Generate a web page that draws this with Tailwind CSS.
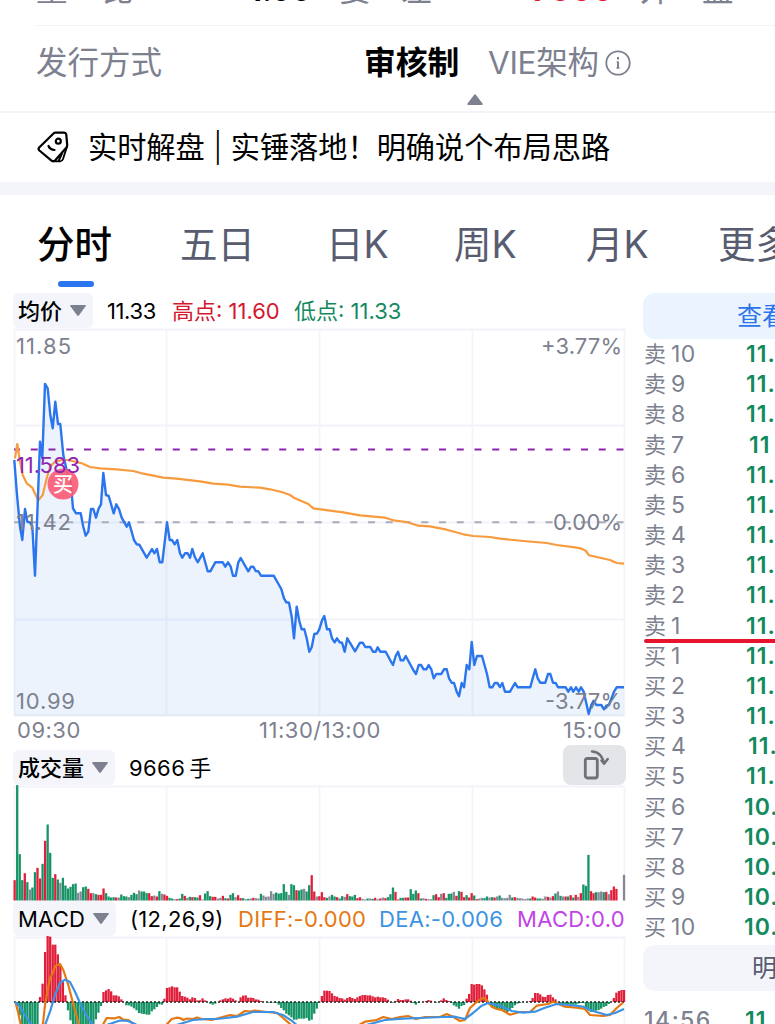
<!DOCTYPE html>
<html lang="zh-CN">
  <head>
    <meta charset="UTF-8" />
    <meta name="viewport" content="width=device-width, initial-scale=1.0" />
    <title>分时</title>
    <script src="https://cdn.jsdelivr.net/npm/@tailwindcss/browser@4"></script>
    <style>
      body {
        font-family: Inter, "Noto Sans CJK SC", sans-serif;
      }
    </style>
  </head>
  <body class="bg-white text-black">
    <div class="w-[775px] h-[1024px] overflow-hidden">
      <!-- Quote details -->
      <div class="h-[26px] overflow-hidden">
        <div class="-mt-[46px] h-[72px] ml-9 flex items-center border-b border-[#f3f4f8] text-[31.5px] leading-none whitespace-nowrap text-[#7d818f]">
          <span class="w-[66px]">量</span>
          <span class="w-[139px]">比</span>
          <span class="w-[98px] pl-[8px] pt-px text-[30px] font-bold text-black">1.00</span>
          <span class="w-[62px]">委</span>
          <span class="w-[131px]">差</span>
          <span class="w-[108px] pt-px font-bold text-[#e6142d]">7000</span>
          <span class="w-[62px]">外</span>
          <span>盘</span>
        </div>
      </div>
      <div class="h-[87px] border-b-2 border-[#f1f3f8]">
        <div class="h-[68px] pt-[5px] pl-9 flex items-center text-[31.5px] leading-none whitespace-nowrap text-[#7d818f]">
          <span class="w-[328px]">发行方式</span>
          <span class="w-[124px] text-[31.800px] font-bold text-black">审核制</span>
          <span class="w-[111px] tracking-[-0.3px]">VIE架构</span>
          <svg class="ml-[6px] size-[26px]" viewBox="0 0 26 26" fill="none" stroke="currentColor" stroke-width="1.8">
            <circle cx="13" cy="13" r="11.7" />
            <path d="M13 11.5v7M13 7v2.4" stroke-width="2" />
            <path d="M11.5 12h1.5M11.2 18h3.6" stroke-width="1.2" />
          </svg>
        </div>
        <svg class="ml-[467px] w-4 h-3" viewBox="0 0 16 12" fill="#7d818f">
          <path d="M7.2 .8q.8-.9 1.6 0L15.5 9.600q.6 1.400-.8 1.400H1.300Q-.1 11 .5 9.600z" />
        </svg>
      </div>

      <!-- News line -->
      <div class="h-[69px] pl-[37px] flex items-center">
        <svg class="mb-[2px] size-8 shrink-0" viewBox="0 0 32 32" fill="none" stroke="#000" stroke-width="2.200" stroke-linecap="round" stroke-linejoin="round">
          <path d="M16.500 2.500Q17.300 1.600 18.500 1.600H27q2 .2 2.300 2L30.200 14q0 1.200-.7 2.400L18 29.500q-1.700 1.300-3.200.3L2.400 19.500q-1.500-1.500-.2-3z" />
          <path d="M30 15.500 26 28q-.8 2.300-2.800 2.400l-7-.1M25 22.500l-3.200 7" stroke-width="1.900" />
          <circle cx="21.300" cy="10.200" r="2.500" />
          <path d="M11.500 15q1.500 3.700 6 4" />
        </svg>
        <div class="ml-[19px] flex text-[29.200px] leading-none whitespace-nowrap">
          <span>实时解盘</span>
          <span class="w-[26px] text-center font-light">|</span>
          <span>实锤落地！明确说个布局思路</span>
        </div>
      </div>
      <div class="h-[13px] bg-[#f3f5fa]"></div>

      <!-- Period tabs -->
      <div class="h-[92px] pl-[37px] flex text-[37.5px] leading-[100px] whitespace-nowrap text-[#575c70]">
        <div class="w-[143px] shrink-0 text-black font-medium">
          <div class="h-[86px]">分时</div>
          <div class="ml-[21px] w-9 h-[6px] rounded-full bg-[#2b75ee]"></div>
        </div>
        <span class="w-[146px] shrink-0">五日</span>
        <span class="w-[128px] shrink-0">日K</span>
        <span class="w-[132px] shrink-0">周K</span>
        <span class="w-[132px] shrink-0">月K</span>
        <span class="shrink-0">更多</span>
      </div>

      <div class="flex pl-[13px] pt-[6px]">
        <!-- Charts -->
        <div class="w-[613px] shrink-0">
          <div class="h-[35px] flex items-center text-[22px] leading-none whitespace-nowrap">
            <div class="w-20 h-[35px] pl-[5px] flex items-center gap-2 rounded-md bg-[#f3f5fa] font-medium">
              均价
              <svg class="w-4 h-[11px]" viewBox="0 0 16 11" fill="#7d818f"><path d="M1 0h14q1.500 0 .6 1.300L9 10.300q-1 1.200-2 0L.4 1.300Q-.5 0 1 0z" /></svg>
            </div>
            <span class="ml-[14px] w-[65px] tracking-[-0.4px]">11.33</span>
            <span class="w-[122px] text-[#d3182f]">高点: 11.60</span>
            <span class="text-[#128a5e]">低点: 11.33</span>
          </div>

          <svg class="block w-[613px] h-[389px]" viewBox="13 328 613 389" fill="none">
            <path d="M14.500 329.500H624.500V715.500H14.500zM14.500 425.500H624.500M14.500 522.500H624.500M14.500 619.500H624.500M166.500 329V716M319.500 329V716M472.500 329V716" stroke="#f3f4fa" stroke-width="1.800" />
            <path id="price-area" fill="#2b75ee" fill-opacity=".09" />
            <path d="M14 449.500H625" stroke="#8d24b0" stroke-width="2" stroke-dasharray="7 10.750" stroke-dashoffset="1" />
            <path d="M14 522.300H625" stroke="#a9adba" stroke-width="2" stroke-dasharray="7 10.750" stroke-dashoffset="1" />
            <polyline stroke="#f79b3e" stroke-width="2.200" stroke-linejoin="round" points="15,458.300 17.300,444 20,461.700 22.700,475 26.700,483.300 32.300,487.700 35.700,495 38.300,500.300 42.700,495 46.700,478.300 50,466.700 55,461.700 61.700,460 68.300,460 81.700,463.300 90,467 100,468.300 116.700,469.300 133.300,471 143.300,473.700 163.300,477.700 176.700,478.700 200,481.300 213.300,483.700 228,484.700 240,486.700 260,487.700 270,489.300 281.700,492 290,495 295,498.300 308.300,504 313.300,508.300 328.300,510.300 343.300,512.300 360,515.300 385,517.700 395,520.700 406.700,522 418.300,525.700 430,526.300 446.700,529.700 463.300,534.300 473.300,536 490,537 500,538.700 523.300,541 546.700,543 556.700,545 575,547.300 581.700,548.700 586,551 589,555.300 610,560 616.700,563 624,563.700" />
            <polyline id="price-line" stroke="#2b75ee" stroke-width="2.400" stroke-linejoin="round" points="14.300,460 17,495 20,526.700 22.300,540 25,509 27.300,521.700 30,522.500 32.300,526 35,575.700 40,441.700 42.300,458 45,384 47.700,388.300 50.300,415 52.700,428.300 55.300,401.700 58,424 60.300,424 63.300,455 67.700,475 70.700,481.700 73,508.300 76,513.300 80.700,513.300 83.300,526.700 85.700,535.700 88.300,531.700 91,509 93.300,509 96,517.700 98.700,508.300 101,504.300 103.300,473 106,495 108.700,496 113.700,513.300 116.300,504.300 119,509 121.700,517.700 126.700,526.700 129,522.300 134,540 136.700,544.300 139.300,544.700 146.700,557.700 152,549 154.300,553.300 157,549 159.700,562.300 162.300,562.300 167,522.300 169.700,540 172,540 174.700,544.300 177.300,540 180,553.300 182.300,557.700 185,553.300 187.700,553.300 190,557.700 192.300,549 195,557.300 197.700,562.300 202.700,553.300 207.700,571.300 210.300,571.300 215.300,562.300 222.700,562.300 225.300,566.700 228,562.300 230.700,566.700 233,575.700 235.700,575.700 238.300,562.300 240.700,558 248.300,571.300 251,566.700 253.300,566.700 255.700,571 258.300,571.300 261,575.700 273.700,575.700 281.300,589 284,598.300 286.300,602.300 289,602.700 291.700,616.700 294,638.300 296.700,606.700 299.300,621 301.700,629.300 304.300,629.300 306.700,638.300 309.300,651.700 311.700,647.300 314.300,634 317,633.500 319.300,629.300 322,620.300 324.300,616 327,629.300 329.700,629.300 332,638.300 334.700,642.300 337,638.300 339.700,642.300 342,642.700 344.700,651.700 347.300,638.300 352.300,646.700 355,651.300 360,642.700 362.700,642.700 365.300,647 370.300,647 373,651.700 375.700,651.700 377.700,647.300 380.300,651.700 385.700,651.700 390.300,660.300 393,665 395.700,656 398,651.700 400.700,660.300 403.300,660.300 405.700,656 413.300,670 416,674 418.700,665 421,665 423.700,669.300 426.300,669.300 428.700,665 431.300,669.300 433.700,678.300 436.300,674 441.300,674 444,669.300 446.700,669.300 449,678.300 451.700,682.700 454,683 456.700,691.700 459,696.300 461.700,683 464,687.300 466.700,665 469.300,669.300 471.700,642 474.300,665 477,656 482,656 487,674 489.700,687.300 492.300,687.300 494.700,683 497.300,683 500,687 502.300,683 505,691.700 510,691.700 515,683 517.700,687.300 530.300,687.300 532.700,678.300 535.300,669.300 537.700,678.300 540.300,682.700 545.300,682.700 548,674 550.300,674 553,682.700 555.700,683 558,687.300 565.700,687.300 568.300,691.700 571,687.300 573.300,691.700 576,687.300 578.700,691.700 581,687.300 583.700,691.700 586.300,703.300 588.700,714 591.300,705 593.700,700.700 596.300,705 601.300,705 604,709.300 606.300,705.700 609,705 614,691.700 616.700,687.300 624,687.300" />
            <circle cx="63" cy="484" r="15.500" fill="#fb5a73" fill-opacity=".9" />
            <text x="63" y="491.500" text-anchor="middle" font-size="20" font-weight="500" fill="#fff">买</text>
            <g font-size="22" fill="#7d818f">
              <text x="16" y="354" textLength="55">11.85</text>
              <text x="16" y="530" textLength="55">11.42</text>
              <text x="16" y="709" textLength="59">10.99</text>
              <text x="541" y="354" textLength="81">+3.77%</text>
              <text x="553" y="530" textLength="69">0.00%</text>
              <text x="545" y="709" textLength="77">-3.77%</text>
              <text x="16" y="473" textLength="64" fill="#8d24b0">11.583</text>
            </g>
          </svg>

          <div class="h-[28px] pl-1 pr-1 pb-[2px] flex items-center justify-between text-[22px] leading-none tracking-[0.5px] text-[#7d818f]">
            <span>09:30</span>
            <span class="-ml-1">11:30/13:00</span>
            <span>15:00</span>
          </div>

          <div class="h-10 flex items-end text-[22px] leading-none whitespace-nowrap">
            <div class="w-[102px] h-[35px] pl-[5px] flex items-center gap-2 rounded-md bg-[#f3f5fa] font-medium">
              成交量
              <svg class="w-4 h-[11px]" viewBox="0 0 16 11" fill="#7d818f"><path d="M1 0h14q1.500 0 .6 1.300L9 10.300q-1 1.200-2 0L.4 1.300Q-.5 0 1 0z" /></svg>
            </div>
            <span class="ml-[14px] h-[35px] flex items-center gap-1"><span class="tracking-[0.4px]">9666</span>手</span>
            <div class="ml-auto w-[63px] h-10 rounded-lg bg-[#e4e5e9] flex items-center justify-center">
              <svg class="mb-[2px] w-8 h-8" viewBox="0 0 32 32" fill="none" stroke="#707175" stroke-width="2.800" stroke-linecap="round" stroke-linejoin="round">
                <rect x="6.300" y="10.500" width="12" height="19.500" rx="2.200" />
                <path d="M13 3.500Q22.500 4 25 15.500M22.500 12.500l2.600 3.300 3.600-4.800" stroke-width="2.500" />
              </svg>
            </div>
          </div>

          <svg class="block w-[613px] h-[116px]" viewBox="13 785 613 116">
            <path d="M14.500 901V786.500H624.500V901M166.500 786V901M319.500 786V901M472.500 786V901" fill="none" stroke="#f3f4fa" stroke-width="1.800" />
            <g id="volume"></g>
          </svg>

          <div class="h-[35px] flex items-center overflow-hidden text-[22px] leading-none whitespace-nowrap tracking-[0.3px]">
            <div class="w-[103px] shrink-0 h-[35px] pl-[5px] flex items-center gap-2 rounded-md bg-[#f3f5fa] tracking-[0.2px]">
              MACD
              <svg class="w-4 h-[11px]" viewBox="0 0 16 11" fill="#7d818f"><path d="M1 0h14q1.500 0 .6 1.300L9 10.300q-1 1.200-2 0L.4 1.300Q-.5 0 1 0z" /></svg>
            </div>
            <span class="ml-[14px] w-[108px] shrink-0">(12,26,9)</span>
            <span class="w-[141px] shrink-0 text-[#e67812]">DIFF:-0.000</span>
            <span class="w-[138px] shrink-0 text-[#3c92e4]">DEA:-0.006</span>
            <span class="text-[#c044e6]">MACD:0.011</span>
          </div>

          <svg class="block w-[613px] h-[88px]" viewBox="13 936 613 88" fill="none">
            <path d="M14.500 1024V937.500H624.500V1024M166.500 937V1024M319.500 937V1024M472.500 937V1024" stroke="#f3f4fa" stroke-width="1.800" />
            <g id="macd"></g>
            <path d="M14 1002H625" stroke="#222" stroke-width="1.600" stroke-dasharray="2 2" />
            <polyline stroke="#e67812" stroke-width="2.200" stroke-linejoin="round" points="15.700,1003 18,1012 21,1026 30,1040 42.700,1026 45,1005 47.700,990 50,978 52.700,973 55.300,966 60,964 63.300,970 68.300,985 74,1007 78.700,1024 83,1036 98,1036 102.700,1025 106.700,1018 115,1018.300 119.300,1017 123.300,1019.700 128,1020 133,1023.500 140,1030 160,1030 166.700,1024.500 171.700,1019 176.700,1017.700 180,1018 183.300,1020 187,1018.500 193,1019 197,1017.500 202,1019 211.700,1020 230,1015 237.300,1016 245,1011 250,1011.500 255,1010.500 267,1012 277,1013 281.700,1016.700 290,1024 300,1034 345,1034 360,1024.500 365,1021.700 376.700,1020 383.300,1017 391.700,1019 400,1017 408,1016 416,1019 425,1017 440,1017 446.700,1014 453,1016.700 460,1021 465,1019.700 470,1008 476.700,1002 483.300,997.700 486.700,1000 491.700,1006.700 496.700,1009 502,1010 510,1014.700 520,1012 530,1012 536.700,1005.700 548,1004 553,1001.700 558,1003.700 565,1006.700 576.700,1007.700 585,1009 590,1015 603,1016 610,1015 616.700,1008 623,1002.700" />
            <polyline stroke="#3c92e4" stroke-width="2.200" stroke-linejoin="round" points="15,1002 20,1006.700 25,1015 30.700,1024 36,1032 42,1032 45,1025 50,1011.700 55,995 60,983 65,979.700 70,982 75,991.700 81.700,1006.700 87.300,1016.700 92.700,1024.500 97,1030 102,1028 108,1024.500 120,1020.500 128,1021 135,1024 145,1030 165,1030 178,1024.500 193,1020 207,1019 217,1019 237,1016.700 253,1012 273,1012 283,1015 293,1021.700 303,1031 352,1031 368,1024.500 385,1020 403,1018.700 420,1018 443,1017 455,1016.700 465,1019 473,1013 481.700,1005.700 488,1003 500,1005.700 511.700,1011 523,1012.700 535,1011.700 545,1007.700 556.700,1004 570,1005 583,1006.700 593,1011 606.700,1015 615,1013 624,1009" />
          </svg>
        </div>

        <!-- Order book -->
        <div class="ml-[17px] w-[300px] shrink-0 text-[22px] leading-none whitespace-nowrap">
          <div class="h-[46px] pl-[94px] flex items-center rounded-xl bg-[#ebf3fe] text-[25px] text-[#2b75ee]">查看</div>
          <div id="asks"></div>
          <div class="relative">
            <div class="absolute -top-[1.500px] left-px w-full h-1 rounded-full bg-[#e6142d]"></div>
          </div>
          <div id="bids"></div>
          <div class="mt-[3px] h-[46px] pl-[109px] flex items-center rounded-xl bg-[#f3f5fa] text-[25px] text-[#575c70]">明细</div>
          <div class="pt-[18px] flex text-[23px] font-medium text-[#7d818f]">
            <span class="w-[102px] pl-px tracking-[1.500px]">14:56</span>
            <span class="font-semibold tracking-[1px] text-[#128a5e]">11.</span>
          </div>
        </div>
      </div>
    </div>

    <script>
      const COLORS = { r: "#e0203a", g: "#169465", x: "#868a98" };
      const STEP = 2.539;

      const volume =
        "r61 g346 g139 g61 r82 g55 x33 g39 g85 r98 r66 g110 r179 g228 g143 g68 r79 g63 x53 g68 g45 g36 g41 g49 g51 x23 x27 g40 g42 r35 r22 x22 g19 r17 r17 r36 g22 g12 g9 g10 r9 x9 g18 g13 g12 x10 g17 g23 g19 x30 g27 g27 g22 r22 r13 x15 r12 g28 x20 r18 r14 g8 g6 x4 r4 g6 g20 r14 x8 g11 r10 g10 g9 r16 x3 g21 g28 g13 r11 r11 x6 x8 r14 g7 r6 g17 g22 x10 r16 r7 g7 x4 g5 x6 r8 x7 x6 g20 x15 x11 x12 x28 x20 g24 g21 g22 g49 g26 x17 g49 g46 r31 g30 g33 x35 g27 g46 r76 r27 x12 r13 r25 r10 g8 x12 g17 g12 r10 g6 g13 x11 r19 g13 g12 g17 r7 r10 x5 x3 g6 x6 g5 r8 x4 r6 x9 r7 g10 g19 g39 r26 r3 g8 g8 r9 r9 g34 g20 g30 r22 g6 x7 r5 x4 x4 g16 r19 r10 x20 r22 g8 g20 g21 x26 r14 g28 r26 r10 g16 r9 r22 g15 r4 x6 x8 g7 g12 x9 g10 r9 x12 g15 x8 x7 x8 x17 g9 r10 x8 x7 x6 x4 x6 g6 r12 r9 g6 g6 x5 x12 r11 x9 r13 g21 x27 g14 x12 r12 g12 r16 g9 r17 x11 r22 g48 g44 g137 r28 r22 g25 x25 x27 g25 r26 x19 r31 r42 r35 x0 x0 x77";

      const macd = [
        0, -12, -40, -80, -90, -90, -90, -90, -90, -70, 15, 55, 150, 198, 196, 172, 172, 143, 110, 60,
        20, -25, -55, -80, -90, -90, -90, -90, -90, -90, -80, -75, -52, -32, -12, 30, 35, 39, 32, 20,
        20, 17, 8, 0, -10, -10, -14, -19, -25, -33, -35, -36, -38, -38, -28, -22, -15, -7, -8, 10,
        42, 44, 47, 44, 44, 31, 18, 16, 13, 8, 14, 12, 5, 5, 11, 5, 0, -5, -8, -5,
        0, 5, 8, 11, 10, 13, 10, 5, 0, 14, 19, 20, 13, 13, 12, 8, 7, 3, 0, 0,
        -2, -2, -2, -3, -8, -18, -25, -35, -40, -46, -53, -53, -50, -50, -50, -48, -56, -53, -35, -20,
        -2, 18, 34, 34, 33, 26, 18, 16, 12, 11, 7, 12, 15, 12, 9, 14, 18, 21, 21, 20,
        20, 17, 14, 16, 14, 14, 12, 7, 0, -2, 3, 9, 6, 6, 8, 8, 4, -3, -8, -2,
        0, 0, 3, 6, 4, 0, -2, 0, 5, 11, 6, 3, -3, -10, -14, -20, -12, -9, 10, 24,
        54, 52, 54, 54, 50, 38, 22, -8, -16, -20, -22, -22, -26, -26, -30, -26, -18, -10, -5, -3,
        0, 0, 0, 3, 12, 27, 27, 23, 16, 15, 21, 22, 14, 8, 0, -6, -10, -10, -8, -8,
        -8, -8, -5, -3, -3, -18, -26, -30, -28, -26, -24, -20, -15, -12, -6, 0, 12, 28, 33, 36, 36,
      ];

      function bar(i, y, h, color) {
        return `<rect x="${13.5 + i * STEP}" y="${y}" width="2.300" height="${h}" fill="${color}" />`;
      }

      document.getElementById("volume").innerHTML = volume
        .split(" ")
        .map((v, i) => {
          const h = v.slice(1) / 3;
          return bar(i, 900.5 - h, h, COLORS[v[0]]);
        })
        .join("");

      document.getElementById("macd").innerHTML = macd
        .map((v, i) => {
          const h = Math.abs(v) / 3;
          return v > 0 ? bar(i, 1002 - h, h, COLORS.r) : bar(i, 1002, h, COLORS.g);
        })
        .join("");

      // Close the price line down to the bottom of the grid
      const line = document.getElementById("price-line").getAttribute("points");
      document.getElementById("price-area").setAttribute("d", `M${line.replaceAll(" ", "L")}V716H14.300z`);

      function row(side, level, price, indent = "pl-[3px]") {
        return `<div class="h-[30.180px] flex items-center pl-[1px] text-[#7d818f]">
          <span class="w-[27px]">${side}</span>
          <span class="w-[72px] pt-px text-[23px] tracking-[0.5px]">${level}</span>
          <span class="${indent} pt-px text-[23px] tracking-[1px] font-semibold text-[#128a5e]">${price}</span>
        </div>`;
      }

      const asks = [10, 9, 8, 7, 6, 5, 4, 3, 2, 1];
      document.getElementById("asks").innerHTML = asks
        .map((n) => (n === 7 ? row("卖", n, "11", "pl-[6px]") : row("卖", n, "11.")))
        .join("");
      document.getElementById("bids").innerHTML = asks
        .slice()
        .reverse()
        .map((n) => (n > 5 ? row("买", n, "10.", "pl-px") : row("买", n, "11.", n === 4 ? "pl-[5px]" : "pl-[3px]")))
        .join("");
    </script>
  </body>
</html>
